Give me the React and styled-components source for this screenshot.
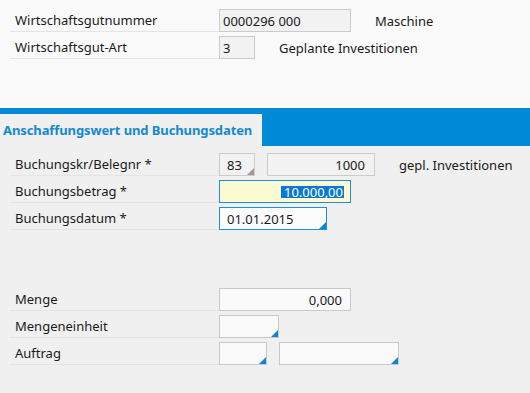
import React from "react";
import styled, { createGlobalStyle, css } from "styled-components";

const GlobalStyle = createGlobalStyle`
  html, body { margin: 0; padding: 0; }
  body {
    background: #f0f0f0;
    font-family: "Noto Sans", "DejaVu Sans", sans-serif;
    font-size: 13px;
    color: #1a1a1a;
  }
`;

const Page = styled.div`
  width: 530px;
  height: 393px;
  overflow: hidden;
  display: flex;
  flex-direction: column;
  background: #f0f0f0;
`;

const TopSection = styled.section`
  background: #fafafa;
  height: 108px;
  box-sizing: border-box;
  padding: 5px 0 0 10px;
`;

const TabStrip = styled.div`
  background: #0089d4;
  height: 38px;
  box-sizing: border-box;
  padding-top: 6px;
  display: flex;
`;

const Tab = styled.div`
  background: #f0f0f0;
  width: 262px;
  height: 32px;
  box-sizing: border-box;
  padding-left: 3px;
  display: flex;
  align-items: center;
  font-weight: bold;
  letter-spacing: -0.1px;
  color: #1588d0;
  white-space: nowrap;
`;

const BottomSection = styled.section`
  flex: 1;
  box-sizing: border-box;
  padding: 3px 0 0 10px;
`;

const Row = styled.div`
  display: flex;
  height: 27px;
`;

const Spacer = styled.div`
  height: ${(p) => p.$h}px;
`;

const Label = styled.div`
  width: 209px;
  height: 27px;
  box-sizing: border-box;
  border-bottom: 1px solid #e4e4e4;
  padding: 4px 0 0 5px;
  display: flex;
  align-items: center;
  white-space: nowrap;
`;

const Fields = styled.div`
  display: flex;
  gap: 12px;
  padding-top: 4px;
  height: 23px;
  align-items: center;
`;

const variants = {
  readonly: css`
    background: #f2f2f2;
    border: 1px solid #cbcbcb;
  `,
  input: css`
    background: #fafafa;
    border: 1px solid #c9c9c9;
  `,
  focus: css`
    background: #fcfad2;
    border: 1px solid #1e8fd8;
  `,
  active: css`
    background: #fcfcfc;
    border: 1px solid #1e8fd8;
  `,
};

const Field = styled.div`
  position: relative;
  width: ${(p) => p.$w}px;
  height: 23px;
  box-sizing: border-box;
  display: flex;
  align-items: center;
  justify-content: ${(p) => (p.$right ? "flex-end" : "flex-start")};
  padding: 0 ${(p) => p.$pr ?? 3}px 0 ${(p) => p.$pl ?? 3}px;
  white-space: nowrap;
  ${(p) => variants[p.$variant || "input"]}
  ${(p) =>
    p.$corner &&
    css`
      &::after {
        content: "";
        position: absolute;
        right: 0;
        bottom: 0;
        width: 0;
        height: 0;
        border-style: solid;
        border-width: 0 0 7px 7px;
        border-color: transparent transparent ${p.$corner} transparent;
      }
    `}
`;

const Selected = styled.span`
  background: #0a78d4;
  color: #ffffff;
  line-height: 12px;
  padding: 0 1px 0 3px;
`;

const Text = styled.div`
  margin-left: 12px;
  white-space: nowrap;
`;

const BLUE = "#0a86d2";
const GREY = "#9a9a9a";

export default function App() {
  return (
    <Page>
      <GlobalStyle />
      <TopSection>
        <Row>
          <Label>Wirtschaftsgutnummer</Label>
          <Fields>
            <Field $w={132} $variant="readonly">0000296 000</Field>
            <Text>Maschine</Text>
          </Fields>
        </Row>
        <Row>
          <Label>Wirtschaftsgut-Art</Label>
          <Fields>
            <Field $w={36} $variant="readonly">3</Field>
            <Text>Geplante Investitionen</Text>
          </Fields>
        </Row>
      </TopSection>
      <TabStrip>
        <Tab>Anschaffungswert und Buchungsdaten</Tab>
      </TabStrip>
      <BottomSection>
        <Row>
          <Label>Buchungskr/Belegnr *</Label>
          <Fields>
            <Field $w={36} $variant="readonly" $pl={7} $corner={GREY}>83</Field>
            <Field $w={108} $variant="readonly" $right $pr={9}>1000</Field>
            <Text>gepl. Investitionen</Text>
          </Fields>
        </Row>
        <Row>
          <Label>Buchungsbetrag *</Label>
          <Fields>
            <Field $w={132} $variant="focus" $right $pr={6}>
              <Selected>10.000,00</Selected>
            </Field>
          </Fields>
        </Row>
        <Row>
          <Label>Buchungsdatum *</Label>
          <Fields>
            <Field $w={108} $variant="active" $pl={7} $corner={BLUE}>01.01.2015</Field>
          </Fields>
        </Row>
        <Spacer $h={54} />
        <Row>
          <Label>Menge</Label>
          <Fields>
            <Field $w={132} $right $pr={8}>0,000</Field>
          </Fields>
        </Row>
        <Row>
          <Label>Mengeneinheit</Label>
          <Fields>
            <Field $w={60} $corner={BLUE} />
          </Fields>
        </Row>
        <Row>
          <Label>Auftrag</Label>
          <Fields>
            <Field $w={48} $corner={BLUE} />
            <Field $w={120} $corner={BLUE} />
          </Fields>
        </Row>
      </BottomSection>
    </Page>
  );
}
